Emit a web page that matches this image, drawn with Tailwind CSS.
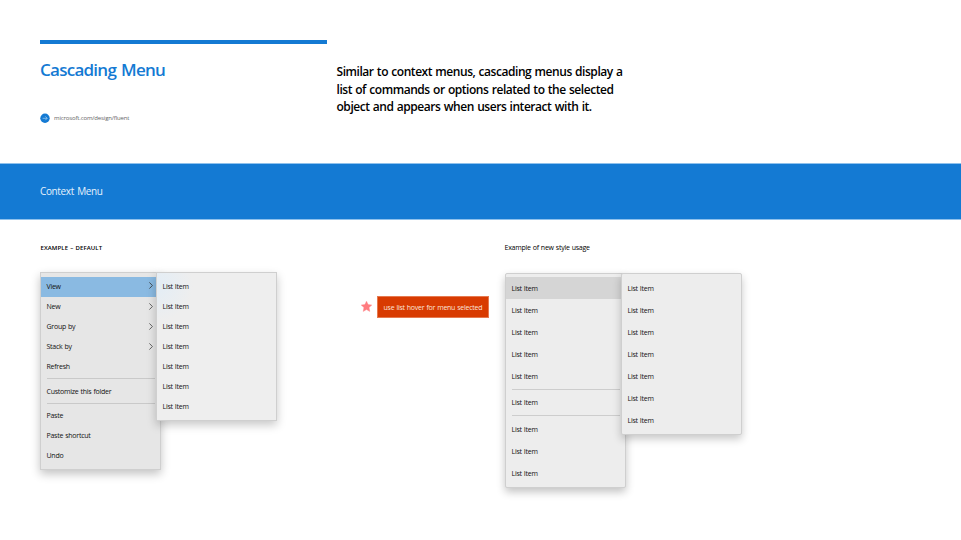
<!DOCTYPE html>
<html lang="en">
<head>
<meta charset="utf-8">
<title>Cascading Menu</title>
<script src="https://cdn.jsdelivr.net/npm/@tailwindcss/browser@4"></script>
</head>
<body class="w-[961px] h-[540px] overflow-hidden bg-white font-['Open_Sans','Noto_Sans',sans-serif] text-black whitespace-nowrap">
<header class="flex h-[163px] pl-10 pt-10">
  <div class="w-[287px]">
    <div class="h-1 bg-[#147ad3]"></div>
    <h1 class="mt-[14px] h-6 leading-6 text-[17px] font-semibold tracking-[-0.74px] [word-spacing:1.2px] text-[#147ad3]">Cascading Menu</h1>
    <div class="mt-[31px] flex items-center gap-1">
      <svg class="size-[10px]" viewBox="0 0 10 10" fill="none"><circle cx="5" cy="5.3" r="4.7" fill="#147ad3"/><path d="M2.6 5.3h4.6M5.3 3.4 7.2 5.3 5.3 7.2" stroke="#a9d2f2" stroke-width=".7"/></svg>
      <span class="text-[6px] leading-[10px] tracking-[-0.15px] text-[#666]">microsoft.com/design/fluent</span>
    </div>
  </div>
  <p class="ml-[9.5px] mt-[23px] text-[12px] leading-[17.5px] font-semibold tracking-[-0.45px] [word-spacing:0.6px]">Similar to context menus, cascading menus display a<br>list of commands or options related to the selected<br>object and appears when users interact with it.</p>
</header>
<section class="flex h-[57px] items-center border-y border-[#8fc1ec] bg-[#147ad3] pl-10 text-[10px] tracking-[-0.36px] [word-spacing:1px] text-[#e4f1fc]">Context Menu</section>
<main class="flex pt-[20px] text-[7px] tracking-[-0.25px] [word-spacing:0.5px] text-[#111]">
  <section class="ml-10 w-[321px]">
    <h2 class="h-[14px] pt-px pl-[0.5px] leading-[14px] text-[6px] font-semibold tracking-[0.1px] text-black">EXAMPLE – DEFAULT</h2>
    <div class="mt-[18px] flex items-start">
      <div class="w-[121px] shrink-0 border border-[#cfcfcf] bg-[#e6e6e6] pt-[3.5px] pb-[3px] leading-5 shadow-[0_4px_9px_rgba(0,0,0,0.24)]">
        <div class="flex h-5 items-center justify-between bg-[#8abae2] pl-[5.5px] pr-[7.5px]">View<svg class="mb-[2px] h-[7px] w-1" viewBox="0 0 4 7" fill="none" stroke="#333" stroke-width=".8"><path d="m.4.4 3 3.1-3 3.1"/></svg></div>
        <div class="flex h-5 items-center justify-between pl-[5.5px] pr-[7.5px]">New<svg class="h-[7px] w-1" viewBox="0 0 4 7" fill="none" stroke="#444" stroke-width=".8"><path d="m.4.4 3 3.1-3 3.1"/></svg></div>
        <div class="flex h-5 items-center justify-between pl-[5.5px] pr-[7.5px]">Group by<svg class="h-[7px] w-1" viewBox="0 0 4 7" fill="none" stroke="#444" stroke-width=".8"><path d="m.4.4 3 3.1-3 3.1"/></svg></div>
        <div class="flex h-5 items-center justify-between pl-[5.5px] pr-[7.5px]">Stack by<svg class="h-[7px] w-1" viewBox="0 0 4 7" fill="none" stroke="#444" stroke-width=".8"><path d="m.4.4 3 3.1-3 3.1"/></svg></div>
        <div class="h-5 pl-[5.5px]">Refresh</div>
        <div class="ml-[5.5px] mr-[5px] mt-[1.5px] h-px bg-[#c9c9c9]"></div>
        <div class="mt-[2px] h-5 pt-[0.75px] pl-[5.5px]">Customize this folder</div>
        <div class="ml-[5.5px] mr-[5px] mt-[2px] h-px bg-[#c9c9c9]"></div>
        <div class="mt-[1.5px] h-5 pl-[5.5px]">Paste</div>
        <div class="h-5 pl-[5.5px]">Paste shortcut</div>
        <div class="h-5 pl-[5.5px]">Undo</div>
      </div>
      <div class="z-10 -ml-[5px] w-[121px] shrink-0 border border-[#cfcfcf] bg-[#eee] bg-[radial-gradient(circle_at_0_12px,#e3edf6,#eeeeee_36px)] pl-[5.5px] pt-[3.5px] pb-[3.5px] leading-5 shadow-[0_4px_9px_rgba(0,0,0,0.22)]">
        <div>List Item</div><div>List Item</div><div>List Item</div><div>List Item</div><div>List Item</div><div>List Item</div><div>List Item</div>
      </div>
    </div>
  </section>
  <aside class="mt-[56px] flex h-[22px] w-[144px] items-center">
    <svg class="-mt-px size-[11px]" viewBox="0 0 12 12" fill="#ff7c80" stroke="#ff7c80" stroke-width=".4"><path d="m6 .2 1.8 3.7 4 .5-3 2.8.8 4.2L6 9.4l-3.6 2 .8-4.2-3-2.8 4-.5z"/></svg>
    <div class="ml-[5px] h-[22px] w-[112px] border border-[#e6794f] bg-[#d83b01] pl-[5.5px] pt-px leading-5 text-[7px] text-[#fbe3d9]">use list hover for menu selected</div>
  </aside>
  <section>
    <h2 class="-ml-[0.5px] h-[14px] pt-[0.75px] leading-[14px] text-black">Example of new style usage</h2>
    <div class="mt-[19px] flex items-start">
      <div class="w-[121px] shrink-0 rounded-[2px] border border-[#cfcfcf] bg-[#ededed] pt-[3px] pb-[2.5px] leading-[20.5px] shadow-[0_4px_9px_rgba(0,0,0,0.24)]">
        <div class="bg-[#d5d5d5] pt-[1.5px] pl-[5.5px]">List Item</div>
        <div class="pt-[1.5px] pl-[5.5px]">List Item</div><div class="pt-[1.5px] pl-[5.5px]">List Item</div><div class="pt-[1.5px] pl-[5.5px]">List Item</div><div class="pt-[1.5px] pl-[5.5px]">List Item</div>
        <div class="ml-[5.5px] mr-[5px] mt-[2px] h-px bg-[#cdcdcd]"></div>
        <div class="mt-[1.5px] pt-[1.5px] pl-[5.5px]">List Item</div>
        <div class="ml-[5.5px] mr-[5px] mt-[1.5px] h-px bg-[#cdcdcd]"></div>
        <div class="mt-[2.5px] pt-[1.5px] pl-[5.5px]">List Item</div><div class="pt-[1.5px] pl-[5.5px]">List Item</div><div class="pt-[1.5px] pl-[5.5px]">List Item</div>
      </div>
      <div class="z-10 -ml-[5px] w-[121px] shrink-0 rounded-[2px] border border-[#cfcfcf] bg-[#ededed] pl-[5.5px] pt-[3px] pb-[3px] leading-[20.5px] shadow-[0_4px_9px_rgba(0,0,0,0.22)]">
        <div class="pt-[1.5px]">List Item</div><div class="pt-[1.5px]">List Item</div><div class="pt-[1.5px]">List Item</div><div class="pt-[1.5px]">List Item</div><div class="pt-[1.5px]">List Item</div><div class="pt-[1.5px]">List Item</div><div class="pt-[1.5px]">List Item</div>
      </div>
    </div>
  </section>
</main>
</body>
</html>
